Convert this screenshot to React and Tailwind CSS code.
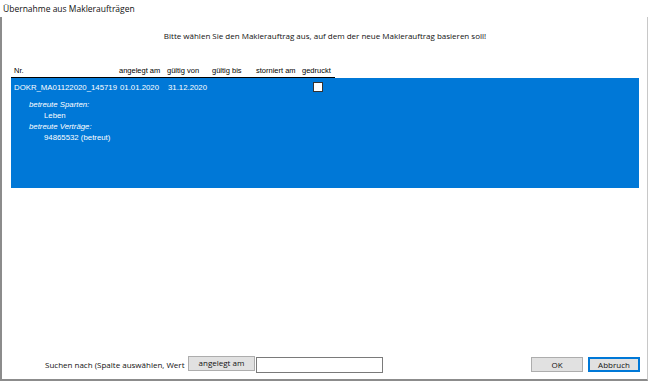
export default function App() {
  return (
    <div className="w-[648px] h-[381px] bg-white flex flex-col text-[#111] overflow-hidden font-['Open_Sans',sans-serif]">
      <div className="h-[17px] pl-[3px] pt-[3px] text-[8.5px] leading-[11px]">
        Übernahme aus Makleraufträgen
      </div>
      <div className="flex-1 flex flex-col border-l-2 border-b-2 border-r border-l-[#8c8c8c] border-b-[#8c8c8c] border-r-[#c8c8c8]">
        <div className="h-[28px] pt-[13px] text-center text-[8px] leading-[11px] pl-[1px]">
          Bitte wählen Sie den Maklerauftrag aus, auf dem der neue Maklerauftrag basieren soll!
        </div>
        <div className="pl-[9px] pr-[8px] font-['Liberation_Sans',sans-serif] text-[7.5px]">
          <div className="flex h-[33px] items-end">
            <div className="flex border-b border-black pb-[2px] leading-[9px] text-black whitespace-nowrap">
              <span className="w-[108px] pl-[3px]">Nr.</span>
              <span className="w-[48px]">angelegt am</span>
              <span className="w-[45px]">gültig von</span>
              <span className="w-[44px]">gültig bis</span>
              <span className="w-[46px]">storniert am</span>
              <span className="w-[33px]">gedruckt</span>
            </div>
          </div>
          <div className="bg-[#0078d7] h-[110px] text-white leading-[10px] pt-[4px]">
            <div className="flex items-start text-[7.8px]">
              <div className="w-[109px] pl-[3px] pt-[1px] whitespace-nowrap">DOKR_MA01122020_145719</div>
              <div className="w-[48px] pt-[1px]">01.01.2020</div>
              <div className="w-[100px] pt-[1px]">31.12.2020</div>
              <div className="w-[10px] h-[10px] ml-[45px] bg-white border border-[#333]" />
            </div>
            <div className="pl-[18px] pt-[7px] italic text-[7.8px]">betreute Sparten:</div>
            <div className="pl-[33px] pt-[1px] text-[7.8px]">Leben</div>
            <div className="pl-[18px] pt-[1px] italic text-[7.8px]">betreute Verträge:</div>
            <div className="pl-[33px] pt-[1px] text-[7.8px]">94865532 (betreut)</div>
          </div>
        </div>
        <div className="flex-1" />
        <div className="flex items-center h-[30px] pt-[1px] text-[8px]">
          <div className="pl-[43px] w-[186px] whitespace-nowrap">Suchen nach (Spalte auswählen, Wert</div>
          <div className="w-[67px] h-[15px] bg-[#e1e1e1] border border-[#adadad] text-center leading-[12px] mt-[-2px]">
            angelegt am
          </div>
          <div className="w-[127px] h-[16px] ml-[1px] bg-white border border-[#7a7a7a]" />
          <div className="flex-1" />
          <div className="w-[52px] h-[15px] bg-[#e1e1e1] border border-[#adadad] text-center leading-[13px]">
            OK
          </div>
          <div className="w-[52px] h-[15px] ml-[5px] mr-[7px] bg-[#e1e1e1] border-2 border-[#0078d7] text-center leading-[11px]">
            Abbruch
          </div>
        </div>
      </div>
    </div>
  );
}
